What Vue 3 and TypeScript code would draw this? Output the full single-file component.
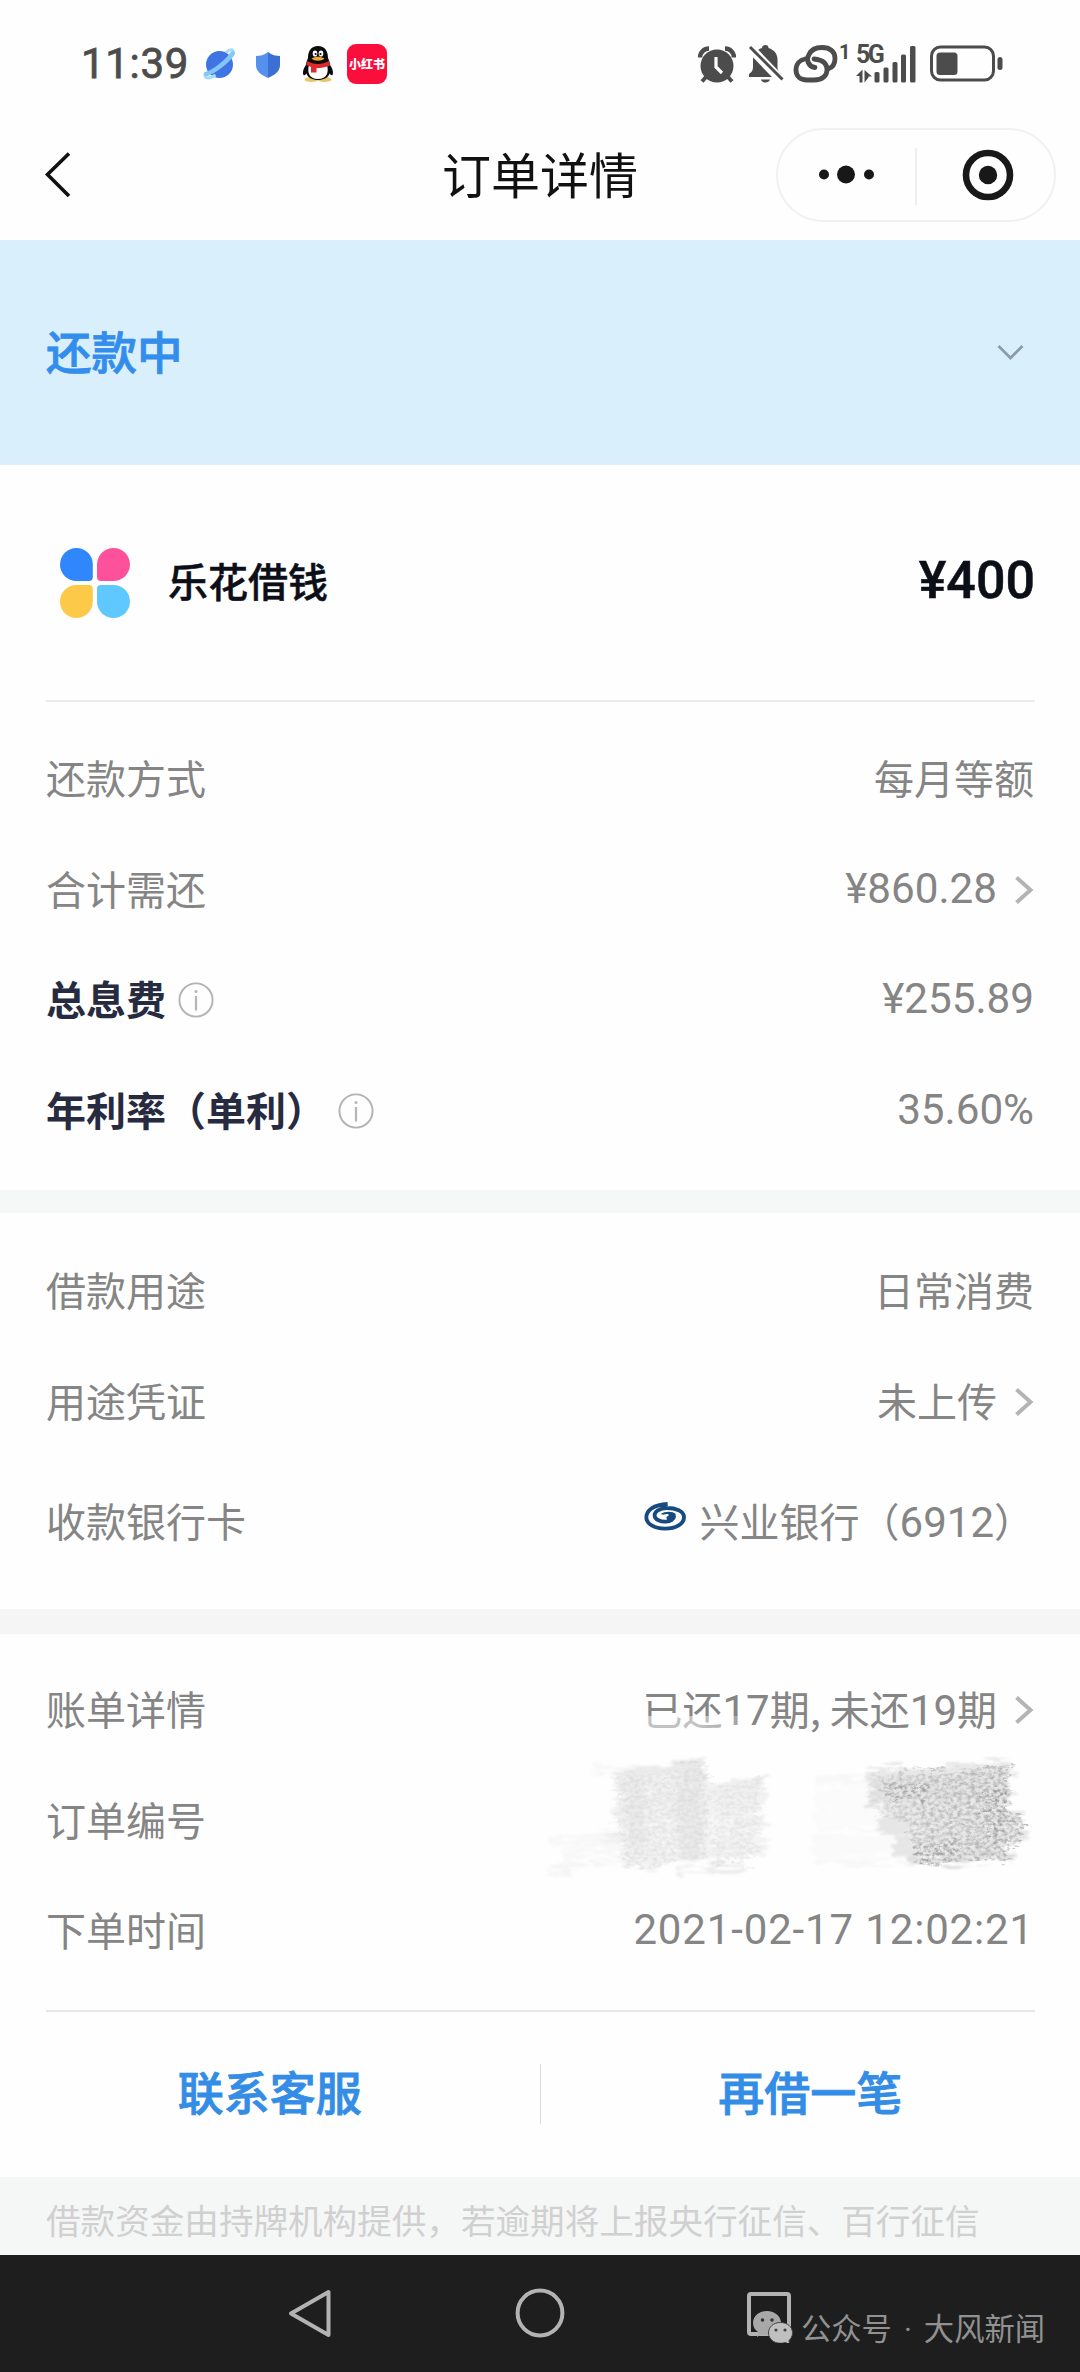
<script setup lang="ts">
interface Row {
  label: string
  value?: string
  strong?: boolean
  info?: boolean
  arrow?: boolean
  bank?: boolean
  scribble?: boolean
  numeric?: boolean
  kind?: string
}

const amountRows: Row[] = [
  { label: '还款方式', value: '每月等额' },
  { label: '合计需还', value: '¥860.28', arrow: true, numeric: true },
  { label: '总息费', value: '¥255.89', strong: true, info: true, numeric: true },
  { label: '年利率（单利）', value: '35.60%', strong: true, info: true, numeric: true },
]

const usageRows: Row[] = [
  { label: '借款用途', value: '日常消费' },
  { label: '用途凭证', value: '未上传', arrow: true },
  { label: '收款银行卡', value: '兴业银行（6912）', bank: true, kind: 'tall' },
]

const orderRows: Row[] = [
  { label: '账单详情', value: '已还17期, 未还19期', arrow: true, kind: 'period' },
  { label: '订单编号', scribble: true },
  { label: '下单时间', value: '2021-02-17 12:02:21', numeric: true, kind: 'date' },
]

const sections: Row[][] = [amountRows, usageRows, orderRows]

// Digits are set in a different face from the Chinese text around them.
const split = (row: Row): string[] =>
  row.numeric ? [row.value ?? ''] : (row.value ?? '').split(/(\d+)/).filter(Boolean)
const isNum = (part: string): boolean => /^\d+$/.test(part)

interface Stroke {
  x1: number
  x2: number
  y: number
  w: number
  tone: string
}

// Slanted eraser strokes that hide the order number: x range, height, thickness, tone.
const strokes: Stroke[] = [
  { x1: 50, x2: 88, y: 14, w: 5, tone: '#f7f7f7' },
  { x1: 68, x2: 160, y: 13, w: 9, tone: '#eaeaea' },
  { x1: 72, x2: 162, y: 24, w: 12, tone: '#f0f0f0' },
  { x1: 164, x2: 224, y: 28, w: 8, tone: '#ebebeb' },
  { x1: 74, x2: 212, y: 36, w: 13, tone: '#f0f0f0' },
  { x1: 68, x2: 220, y: 48, w: 13, tone: '#f1f1f1' },
  { x1: 72, x2: 222, y: 60, w: 12, tone: '#f2f2f2' },
  { x1: 6, x2: 210, y: 75, w: 12, tone: '#f8f8f8' },
  { x1: 60, x2: 222, y: 76, w: 10, tone: '#f0f0f0' },
  { x1: 20, x2: 214, y: 88, w: 12, tone: '#f8f8f8' },
  { x1: 76, x2: 214, y: 88, w: 10, tone: '#f2f2f2' },
  { x1: 4, x2: 224, y: 101, w: 6, tone: '#f5f5f5' },
  { x1: 80, x2: 218, y: 100, w: 11, tone: '#f1f1f1' },
  { x1: 132, x2: 202, y: 113, w: 8, tone: '#ededed' },
  { x1: 270, x2: 350, y: 24, w: 8, tone: '#f8f8f8' },
  { x1: 272, x2: 350, y: 40, w: 20, tone: '#fbfbfb' },
  { x1: 270, x2: 350, y: 62, w: 22, tone: '#fbfbfb' },
  { x1: 268, x2: 360, y: 88, w: 22, tone: '#fafafa' },
  { x1: 274, x2: 360, y: 105, w: 7, tone: '#f8f8f8' },
  { x1: 322, x2: 470, y: 15, w: 11, tone: '#e8e8e8' },
  { x1: 326, x2: 464, y: 27, w: 13, tone: '#e4e4e4' },
  { x1: 322, x2: 466, y: 40, w: 13, tone: '#e4e4e4' },
  { x1: 340, x2: 462, y: 53, w: 13, tone: '#e8e8e8' },
  { x1: 334, x2: 480, y: 66, w: 13, tone: '#e6e6e6' },
  { x1: 350, x2: 480, y: 79, w: 12, tone: '#e6e6e6' },
  { x1: 350, x2: 462, y: 91, w: 12, tone: '#e6e6e6' },
  { x1: 362, x2: 470, y: 102, w: 9, tone: '#e0e0e0' },
]
const slant = (s: Stroke): number => (s.x2 - s.x1) * (s.x1 < 250 ? 0.06 : 0.02)
</script>

<template>
  <div class="page">
    <header class="status">
      <span class="time">11:39</span>
      <svg class="ic-planet" width="32" height="32" viewBox="0 0 32 32">
        <circle cx="16.500" cy="16.500" r="13.500" fill="#3f74e2" />
        <path d="M2.500 24.500C0 31 6 31.500 12.500 27M23 4.500C28 0 32 1 29.500 8" fill="none" stroke="#a5daf8" stroke-width="3" />
        <path d="M3.500 26C11 23.500 24 14 29.500 5.500" fill="none" stroke="#85c6f8" stroke-width="4.600" stroke-linecap="round" />
      </svg>
      <svg class="ic-shield" width="26" height="28" viewBox="0 0 26 28">
        <path d="M13 1c4 3 8 4 12 4v9c0 6-5 10-12 13z" fill="#3b6fd3" />
        <path d="M13 1C9 4 5 5 1 5v9c0 6 5 10 12 13z" fill="#5590ec" />
      </svg>
      <svg class="ic-penguin" width="32" height="38" viewBox="0 0 32 38">
        <ellipse cx="9.500" cy="34.500" rx="7" ry="2.500" fill="#e7c56c" />
        <ellipse cx="22.500" cy="34.500" rx="7" ry="2.500" fill="#e7c56c" />
        <path d="M5 19C2 22 0 27 1.500 30c1 1 3-1 4-3zM27 19c3 3 5 8 3.500 11-1 1-3-1-4-3z" fill="#0b0b0b" />
        <path d="M16 1C9 1 6 6 6 13c-2 4-3 9-2 14 1 6 7 8 12 8s11-2 12-8c1-5 0-10-2-14C26 6 23 1 16 1z" fill="#0b0b0b" />
        <path d="M7 20c-2 7 0 14 9 14s11-7 9-14z" fill="#fff" />
        <ellipse cx="13" cy="8.500" rx="2.300" ry="3.100" fill="#fff" />
        <ellipse cx="19" cy="8.500" rx="2.300" ry="3.100" fill="#fff" />
        <circle cx="13.600" cy="9" r="1.100" fill="#111" />
        <circle cx="18.500" cy="9" r="1.100" fill="#111" />
        <path d="M9.500 13.500c4-2.200 9-2.200 13 0-3 3-10 3-13 0z" fill="#f0a43a" />
        <path d="M5 16c7 4 15 4 22 0l1 4.500c-5 2-9 2.500-13.500 2.500v4.500H9V22L4.500 20z" fill="#de2a2e" />
      </svg>
      <span class="app-badge">小红书</span>

      <div class="status-right">
        <svg class="ic-alarm" width="38" height="38" viewBox="0 0 38 38">
          <circle cx="19" cy="21" r="16.500" fill="#4c4c4c" />
          <path d="M2 12.500A9 9 0 0 1 11 3.500" fill="none" stroke="#4c4c4c" stroke-width="4.500" />
          <path d="M36 12.500A9 9 0 0 0 27 3.500" fill="none" stroke="#4c4c4c" stroke-width="4.500" />
          <path d="M8 32l-4 4.500M30 32l4 4.500" stroke="#4c4c4c" stroke-width="4" />
          <path d="M18 12v10l6 6" fill="none" stroke="#fff" stroke-width="3.200" />
        </svg>
        <svg class="ic-bell" width="36" height="40" viewBox="0 0 36 40">
          <path d="M17.500 1c2 0 3 1 3 3 6 2 9 6 9 12v8c0 3 2 4 4 6v3H1v-3c3-2 4-4 4-7v-7c0-6 3-10 9-12 0-2 1.500-3 3.500-3z" fill="#4c4c4c" />
          <path d="M13 35.500h9c-1 4-8 4-9 0z" fill="#4c4c4c" />
          <path d="M0 1.500L33 36" stroke="#fff" stroke-width="9" />
          <path d="M2 3L34.500 35.500" stroke="#4c4c4c" stroke-width="3" />
        </svg>
        <svg class="ic-link" width="46" height="40" viewBox="0 0 46 40">
          <g fill="none" stroke="#4c4c4c" stroke-width="4.800" stroke-linecap="round">
            <path d="M22 23.500c-7-1-9-8-6-13C18 6 22 3.500 29 3.500c8 0 13 4 13 11 0 5-2.500 9-7 10.500" />
            <path d="M12 15C7 16 3 20 3 26c0 6 4 10 11 10h7c9 0 13-5 13-10 0-6-3-10-13-11" />
          </g>
        </svg>
        <span class="sup">1</span>
        <div class="signal">
          <span class="net">5G</span>
          <svg width="60" height="38" viewBox="0 0 60 38">
            <g fill="#4c4c4c">
              <path d="M0 31l6.500-6.500V37.500h-3V31zM8.500 25l7.500 6.500h-3.500v1l-4 5z" />
              <rect x="18.500" y="27" width="5" height="10.500" rx="1.500" />
              <rect x="27.500" y="22.500" width="5" height="15" rx="1.500" />
              <rect x="36.500" y="17" width="5" height="20.500" rx="1.500" />
              <rect x="45" y="9.500" width="5" height="28" rx="1.500" />
              <rect x="54" y="1" width="5.500" height="36.500" rx="1.500" />
            </g>
          </svg>
        </div>
        <svg class="ic-battery" width="74" height="38" viewBox="0 0 74 38">
          <rect x="1.500" y="2" width="62" height="33" rx="9" fill="none" stroke="#4c4c4c" stroke-width="3" />
          <rect x="6.500" y="7.500" width="21" height="22.500" rx="3.500" fill="#4c4c4c" />
          <rect x="67.500" y="12" width="5" height="13" rx="2.500" fill="#4c4c4c" />
        </svg>
      </div>
    </header>

    <nav class="navbar">
      <svg class="back" width="28" height="48" viewBox="0 0 28 48">
        <path d="M25 2.500L3.500 23.500 25 45" fill="none" stroke="#111" stroke-width="3.600" />
      </svg>
      <h1>订单详情</h1>
      <div class="capsule">
        <svg width="276" height="90" viewBox="0 0 276 90">
          <circle cx="46" cy="44.500" r="5" fill="#181818" />
          <circle cx="68" cy="44.500" r="9" fill="#181818" />
          <circle cx="91" cy="44.500" r="5" fill="#181818" />
          <path d="M138 18v57" stroke="#e9e9e9" stroke-width="1.500" />
          <circle cx="210" cy="45" r="22" fill="none" stroke="#181818" stroke-width="6.600" />
          <circle cx="210" cy="45" r="9.200" fill="#181818" />
        </svg>
      </div>
    </nav>

    <section class="banner">
      <strong>还款中</strong>
      <svg width="27" height="17" viewBox="0 0 27 17">
        <path d="M1.500 2l12 12 12-12" fill="none" stroke="#8b9ca6" stroke-width="2.800" />
      </svg>
    </section>

    <template v-for="(rows, i) in sections" :key="i">
      <div v-if="i > 0" :class="['band', 'band' + i]"></div>
      <div v-if="i === 0" class="product">
        <svg width="70" height="70" viewBox="0 0 70 70">
          <path d="M16.500 0a16.300 16.500 0 0 1 16.300 16.500V29a4 4 0 0 1-4 4H16.500a16.500 16.500 0 0 1 0-33z" fill="#2f87fb" />
          <path d="M53.500 0a16.500 16.500 0 0 1 0 33H41a4 4 0 0 1-4-4V16.500A16.500 16.500 0 0 1 53.500 0z" fill="#fd529b" />
          <path d="M16.500 37h12.300a4 4 0 0 1 4 4v12.500A16.400 16.500 0 1 1 16.500 37z" fill="#fdc948" />
          <path d="M41 37h12.500A16.500 16.500 0 1 1 37 53.500V41a4 4 0 0 1 4-4z" fill="#5fc9ff" />
        </svg>
        <b class="pname">乐花借钱</b>
        <b class="amount">¥400</b>
      </div>
      <div :class="['rows', 'rows' + i]">
        <div v-for="row in rows" :key="row.label" :class="['row', row.kind]">
          <span :class="['label', { strong: row.strong }]">{{ row.label }}</span>
          <svg v-if="row.info" class="info" width="36" height="36" viewBox="0 0 36 36">
            <circle cx="18" cy="18" r="16.600" fill="none" stroke="#b3b3b3" stroke-width="1.900" />
            <path d="M18 14v14.500" stroke="#b5b5b5" stroke-width="2.200" />
            <circle cx="18" cy="9.500" r="1.500" fill="#b5b5b5" />
          </svg>
          <span class="spacer"></span>
          <svg v-if="row.bank" class="bank" width="45" height="31" viewBox="0 0 135 93">
            <path d="M74 6C30 8 11 26 10 45c0 21 24 35 56 35 34 0 57-15 57-34S98 18 72 18C50 18 33 29 35 42c1 11 18 18 34 17 13-1 25-8 24-17" fill="none" stroke="#174b80" stroke-width="11.500" />
            <path d="M98 36C88 27 66 28 53 36l9 2c8-3 14-2 16 1l-8 7 4 14c14-3 25-12 24-24z" fill="#174b80" />
          </svg>
          <span v-if="row.value" :class="['value', { numeric: row.numeric }]"><span v-for="(part, k) in split(row)" :key="k" :class="{ num: isNum(part) }">{{ part }}</span></span>
          <svg v-if="row.arrow" class="arrow" width="20" height="30" viewBox="0 0 20 30">
            <path d="M2.500 2.500L16.500 15 2.500 27.500" fill="none" stroke="#b4b4b4" stroke-width="4" />
          </svg>
          <svg v-if="row.scribble" class="scribble" width="500" height="130" viewBox="0 0 500 130">
            <defs>
              <filter id="smear" x="0" y="0" width="500" height="130" filterUnits="userSpaceOnUse">
                <feTurbulence type="fractalNoise" baseFrequency="0.03 0.22" numOctaves="4" seed="3" result="n" />
                <feDisplacementMap in="SourceGraphic" in2="n" scale="24" xChannelSelector="R" yChannelSelector="B" result="d" />
                <feGaussianBlur in="d" stdDeviation="1.2" />
              </filter>
              <filter id="grain" x="0" y="0" width="500" height="130" filterUnits="userSpaceOnUse">
                <feTurbulence type="fractalNoise" baseFrequency="0.22 0.3" numOctaves="4" seed="8" result="n" />
                <feColorMatrix in="n" type="matrix" values="0 0 0 0 0  0 0 0 0 0  0 0 0 0 0  2.6 0 0 0 -0.95" result="m" />
                <feTurbulence type="fractalNoise" baseFrequency="0.04 0.2" numOctaves="3" seed="5" result="w" />
                <feDisplacementMap in="SourceGraphic" in2="w" scale="24" xChannelSelector="R" yChannelSelector="B" result="d" />
                <feComposite in="d" in2="m" operator="in" result="c" />
                <feGaussianBlur in="c" stdDeviation="0.6" />
              </filter>
              <linearGradient id="edge" x1="0" x2="1" y1="0" y2="0">
                <stop offset="0" stop-color="#a0a0a0" stop-opacity=".12" />
                <stop offset=".35" stop-color="#a0a0a0" stop-opacity=".55" />
                <stop offset="1" stop-color="#949494" stop-opacity=".65" />
              </linearGradient>
            </defs>
            <g filter="url(#smear)">
              <path
                v-for="(s, k) in strokes"
                :key="k"
                :d="`M${s.x1} ${s.y + slant(s)}L${s.x2} ${s.y - slant(s)}`"
                :stroke="s.tone"
                :stroke-width="s.w"
              />
              <path d="M136 10l26-6-4 36 4 44-8 18-16-2-6-44z" fill="#e5e5e5" opacity=".6" />
              <path d="M80 20h20l2 70-20 6z" fill="#e8e8e8" opacity=".6" />
            </g>
            <g filter="url(#grain)">
              <path d="M72 22l92-16-2 96-84 12z" fill="#c9c9c9" opacity=".35" />
              <path d="M172 30l46-9-4 84-48 10z" fill="#cdcdcd" opacity=".35" />
              <path d="M322 18l148-9-6 48 16 4v26l-14 4 4 12-96 6-8-42-40-12z" fill="url(#edge)" />
              <path d="M336 26h44v18h-44zM370 88h42v18h-42zM436 34h24l4 46-20 8z" fill="#828282" opacity=".45" />
            </g>
          </svg>
        </div>
      </div>
    </template>

    <div class="rule"></div>
    <div class="actions">
      <div class="action">联系客服</div>
      <div class="sep"></div>
      <div class="action">再借一笔</div>
    </div>

    <footer class="note">借款资金由持牌机构提供，若逾期将上报央行征信、百行征信</footer>

    <div class="sysnav">
      <svg class="sys-icons" width="560" height="60" viewBox="0 0 560 60">
        <g fill="none" stroke="#b3b3b3" stroke-width="4" stroke-linejoin="round">
          <path d="M68.500 9v43L31 30.500z" />
          <circle cx="280" cy="30" r="22.400" />
          <rect x="489" y="11" width="40" height="40" rx="2" />
        </g>
        <path d="M507 28c-8 0-14 5-14 12 0 4 2 7 5 9l-1 5 5-3c3 1 6 1 9 0l10-12c-1-7-7-11-14-11z" fill="#a8a8a8" />
        <circle cx="502.500" cy="37" r="1.800" fill="#333" />
        <circle cx="512" cy="37" r="1.800" fill="#333" />
        <path d="M520.500 39.500c7 0 12 4.500 12 10.500 0 3-1.500 5.500-3.500 7.500l.5 4-4-2c-10 3-17-3-17-9.500 0-6 5-10.500 12-10.500z" fill="#c0c0c0" stroke="#444" stroke-width="1" />
        <circle cx="516" cy="47" r="1.600" fill="#444" />
        <circle cx="525" cy="47" r="1.600" fill="#444" />
      </svg>
      <span class="mark">公众号 · 大风新闻</span>
    </div>
  </div>
</template>

<style>
body {
  margin: 0;
  background: #fefefe;
}
</style>

<style scoped>
.page {
  width: 1080px;
  height: 2372px;
  overflow: hidden;
  display: flex;
  flex-direction: column;
  background: #fefefe;
  font-family: 'Noto Sans CJK SC', 'Noto Sans', sans-serif;
  color: #858585;
}
.page > * {
  flex: none;
  box-sizing: border-box;
}
.status {
  height: 128px;
  display: flex;
  align-items: center;
  padding-left: 81px;
}
.time {
  width: 122px;
  font: 400 42px/50px Roboto, sans-serif;
  letter-spacing: 0.7px;
  color: #4c4c4c;
  -webkit-text-stroke: 0.8px #4c4c4c;
}
.ic-shield {
  margin: 2px 0 0 20px;
}
.ic-penguin {
  margin-left: 21px;
}
.app-badge {
  margin-left: 13px;
  width: 40px;
  height: 40px;
  border-radius: 9px;
  background: #fb0d3c;
  color: #fff;
  font-size: 12px;
  font-weight: 900;
  line-height: 39px;
  text-align: center;
  white-space: nowrap;
}
.status-right {
  margin-left: 311px;
  display: flex;
  align-items: center;
}
.ic-bell {
  margin-left: 12px;
}
.ic-link {
  margin-left: 9px;
}
.sup {
  width: 17px;
  margin: -24px 0 0 0;
  font: 700 20px/20px Roboto, sans-serif;
  color: #4c4c4c;
}
.signal {
  position: relative;
  height: 38px;
}
.net {
  position: absolute;
  left: 0;
  top: -1px;
  font: 700 25px/22px Roboto, sans-serif;
  letter-spacing: -2.5px;
  color: #4c4c4c;
}
.ic-battery {
  margin-left: 14px;
}
.navbar {
  height: 112px;
  display: flex;
  align-items: flex-start;
  padding-left: 44px;
}
.back {
  margin-top: 23px;
}
h1 {
  margin: 12px 0 0 370px;
  width: 334px;
  font-size: 49px;
  font-weight: 400;
  line-height: 66px;
  color: #111;
}
.capsule {
  box-sizing: border-box;
  width: 280px;
  height: 94px;
  border: 2px solid #f1f1f1;
  border-radius: 47px;
}
.capsule svg {
  display: block;
}
.banner {
  height: 225px;
  background: #daeffc;
  display: flex;
  align-items: center;
  justify-content: space-between;
  padding: 0 56px 0 46px;
}
.banner strong {
  margin-top: -5px;
  font-size: 45.5px;
  font-weight: 500;
  line-height: 66px;
  color: #328ded;
  -webkit-text-stroke: 0.8px #328ded;
}
.product {
  height: 237px;
  margin: 0 45px 0 46px;
  padding-left: 14px;
  border-bottom: 2px solid #ececec;
  display: flex;
  align-items: center;
}
.pname {
  margin: -6px 0 0 38px;
  font-size: 40px;
  font-weight: 500;
  color: #0c0f18;
  -webkit-text-stroke: 0.5px #0c0f18;
}
.amount {
  margin: -3px 0 0 auto;
  font: 500 52px/60px Roboto, sans-serif;
  color: #0c0f18;
  -webkit-text-stroke: 0.5px #0c0f18;
}
.rows {
  padding: 0 46px;
}
.rows0 {
  height: 488px;
  padding-top: 22px;
}
.rows1 {
  height: 396px;
  padding-top: 23px;
}
.rows2 {
  height: 376px;
  padding-top: 21px;
}
.row {
  height: 110.5px;
  display: flex;
  align-items: center;
  white-space: nowrap;
}
.row.tall {
  height: 130px;
}
.label,
.value {
  height: 56px;
  margin-top: -4px;
  font-size: 40px;
  line-height: 56px;
}
.num {
  font-family: Roboto, sans-serif;
  font-size: 42px;
  line-height: 1;
}
.label.strong {
  font-weight: 700;
  color: #262b40;
}
.info {
  margin-left: 12px;
}
.spacer {
  flex: 1;
}
.numeric {
  font-family: Roboto, sans-serif;
  font-size: 42.2px;
  margin-top: -2px;
}
.date .value {
  font-size: 42px;
  letter-spacing: 0.85px;
}
.period .value {
  position: relative;
}
.period .value::before {
  content: '';
  position: absolute;
  left: 0;
  bottom: 4px;
  width: 96px;
  height: 16px;
  background: linear-gradient(to right, rgba(254, 254, 254, 0.5) 60%, rgba(254, 254, 254, 0.25));
}
.arrow {
  margin-left: 17px;
}
.bank {
  margin: -10px 12px 0 0;
}
.scribble {
  margin-right: -10px;
}
.band {
  background: #f5f5f5;
}
.band1 {
  height: 23px;
  background: #f6f8f8;
}
.band2 {
  height: 25px;
}
.rule {
  height: 2px;
  margin: 0 45px 0 46px;
  background: #e6e6e6;
}
.actions {
  height: 165px;
  display: flex;
  align-items: center;
}
.action {
  flex: 1;
  margin-top: -9px;
  text-align: center;
  font-size: 46px;
  font-weight: 500;
  line-height: 66px;
  color: #338ce6;
  -webkit-text-stroke: 0.8px #338ce6;
}
.sep {
  width: 1px;
  height: 60px;
  margin-top: -2px;
  background: #d9d9d9;
}
.note {
  height: 78px;
  padding: 0 0 0 46px;
  background: #f5f6f6;
  font-size: 34.6px;
  line-height: 85px;
  color: #d0d0d0;
  white-space: nowrap;
}
.sysnav {
  height: 117px;
  background: #1e1e1e;
  display: flex;
  align-items: flex-start;
  padding-left: 260px;
}
.sys-icons {
  margin-top: 28px;
}
.mark {
  margin: 53px 0 0 -19px;
  font-family: Roboto, 'Noto Sans CJK SC', sans-serif;
  font-size: 30.3px;
  line-height: 44px;
  color: #919191;
  white-space: nowrap;
  word-spacing: 4.5px;
}
</style>
